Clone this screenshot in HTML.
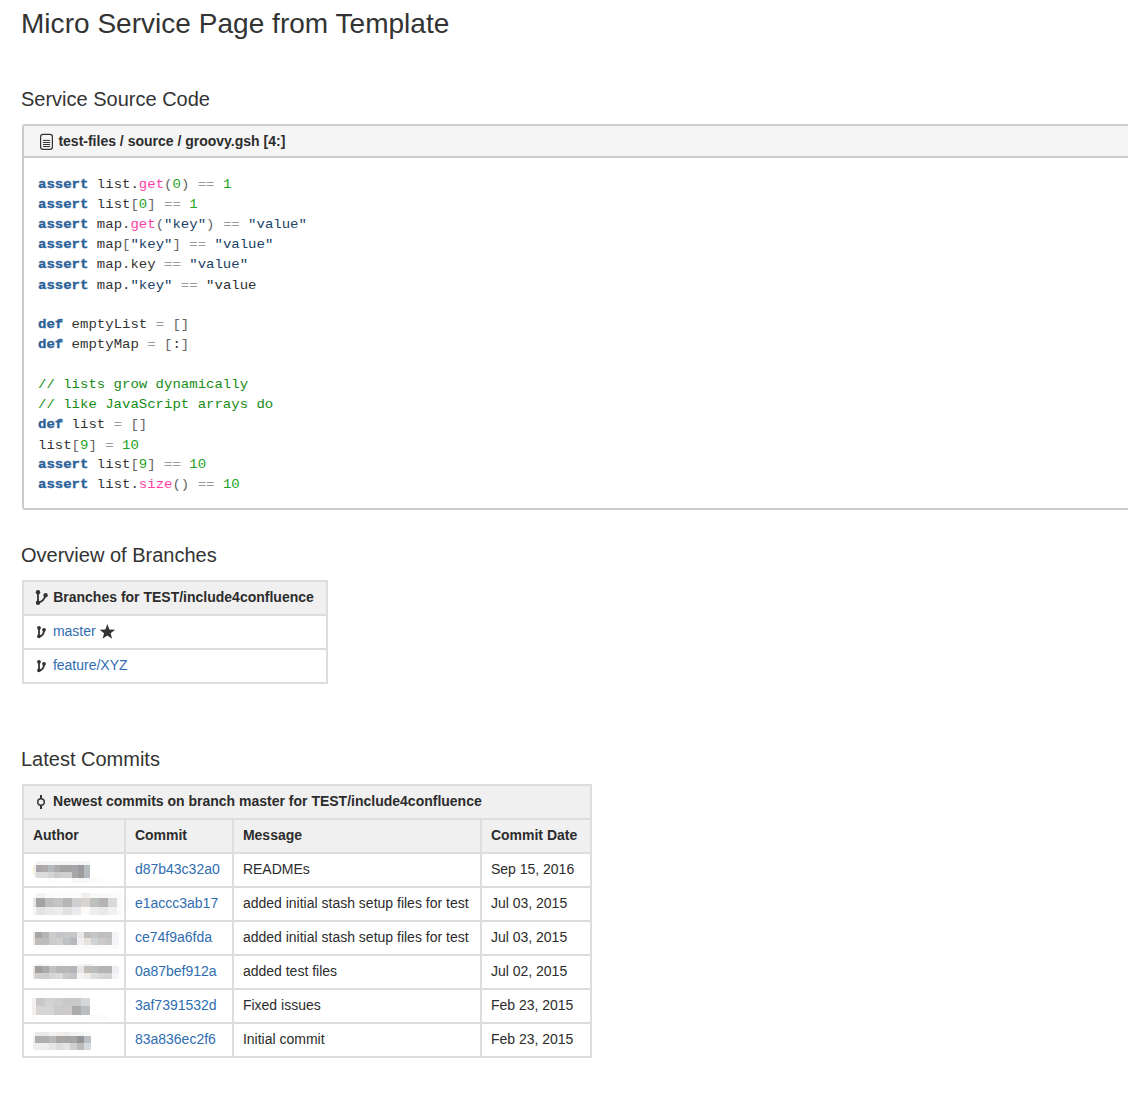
<!DOCTYPE html>
<html>
<head>
<meta charset="utf-8">
<title>Micro Service Page from Template</title>
<style>
*{box-sizing:border-box;margin:0;padding:0}
html,body{width:1128px;height:1106px;overflow:hidden;background:#fff}
body{font-family:"Liberation Sans",sans-serif;font-size:14px;color:#2c2c2c;position:relative}
.a{position:absolute;white-space:nowrap;line-height:18px;height:18px}
.b{font-weight:bold}
h1{position:absolute;left:21px;top:7px;letter-spacing:.03px;font-size:28px;font-weight:normal;line-height:34px;color:#333;white-space:nowrap}
h2{position:absolute;left:21px;font-size:20px;font-weight:normal;line-height:24px;color:#333;white-space:nowrap}
#h2a{top:87px}
#h2b{top:543px}
#h2c{top:747px}
#panel{position:absolute;left:22px;top:124px;width:1120px;height:386px;border:2px solid #ccc;border-radius:3px;background:#fff}
#phead{position:absolute;left:0;top:0;right:0;height:32px;background:#f5f5f5;border-bottom:2px solid #ccc}
pre{position:absolute;left:38px;top:174.7px;font-family:"Liberation Mono",monospace;font-size:14px;line-height:22.727px;color:#333;transform-origin:0 0;transform:scaleY(.88)}
pre .k{color:#2b6199;font-weight:bold;-webkit-text-stroke:.35px #2b6199}
pre .o{color:#9a9a9a}
pre .f{color:#ff3fa6}
pre .p{color:#666}
pre .n{color:#22a322}
pre .c{color:#168c16}
pre .s{color:#1a4166}
.ln{position:absolute;background:#ddd}
.hb{position:absolute;background:#f0f0f0}
.lk{color:#2f6db0}
svg{position:absolute;left:0;top:0;overflow:visible}
#pix i{position:absolute;display:block}
</style>
</head>
<body>
<h1>Micro Service Page from Template</h1>
<h2 id="h2a">Service Source Code</h2>
<div id="panel"><div id="phead"></div></div>
<div class="a b" style="left:58.4px;top:132px">test-files / source / groovy.gsh [4:]</div>
<pre><span class="k">assert</span> list.<span class="f">get</span><span class="p">(</span><span class="n">0</span><span class="p">)</span> <span class="o">==</span> <span class="n">1</span>
<span class="k">assert</span> list<span class="p">[</span><span class="n">0</span><span class="p">]</span> <span class="o">==</span> <span class="n">1</span>
<span class="k">assert</span> map.<span class="f">get</span><span class="p">(</span><span class="s">"key"</span><span class="p">)</span> <span class="o">==</span> <span class="s">"value"</span>
<span class="k">assert</span> map<span class="p">[</span><span class="s">"key"</span><span class="p">]</span> <span class="o">==</span> <span class="s">"value"</span>
<span class="k">assert</span> map.key <span class="o">==</span> <span class="s">"value"</span>
<span class="k">assert</span> map.<span class="s">"key"</span> <span class="o">==</span> "value

<span class="k">def</span> emptyList <span class="o">=</span> <span class="p">[]</span>
<span class="k">def</span> emptyMap <span class="o">=</span> <span class="p">[</span>:<span class="p">]</span>

<span class="c">// lists grow dynamically</span>
<span class="c">// like JavaScript arrays do</span>
<span class="k">def</span> list <span class="o">=</span> <span class="p">[]</span>
list<span class="p">[</span><span class="n">9</span><span class="p">]</span> <span class="o">=</span> <span class="n">10</span>
<span class="k">assert</span> list<span class="p">[</span><span class="n">9</span><span class="p">]</span> <span class="o">==</span> <span class="n">10</span>
<span class="k">assert</span> list.<span class="f">size</span><span class="p">()</span> <span class="o">==</span> <span class="n">10</span></pre>
<h2 id="h2b">Overview of Branches</h2>
<h2 id="h2c">Latest Commits</h2>

<div class="hb" style="left:22px;top:580px;width:306px;height:36px"></div>
<div class="ln" style="left:22px;top:580px;width:306px;height:2px"></div>
<div class="ln" style="left:22px;top:614px;width:306px;height:2px"></div>
<div class="ln" style="left:22px;top:648px;width:306px;height:2px"></div>
<div class="ln" style="left:22px;top:682px;width:306px;height:2px"></div>
<div class="ln" style="left:22px;top:580px;width:2px;height:104px"></div>
<div class="ln" style="left:326px;top:580px;width:2px;height:104px"></div>
<div class="a b" style="left:53.2px;top:588px">Branches for TEST/include4confluence</div>
<div class="a lk" style="left:52.9px;top:622px">master</div>
<div class="a lk" style="left:52.9px;top:656px">feature/XYZ</div>
<div class="hb" style="left:22px;top:784px;width:570px;height:70px"></div>
<div class="ln" style="left:22px;top:784px;width:570px;height:2px"></div>
<div class="ln" style="left:22px;top:818px;width:570px;height:2px"></div>
<div class="ln" style="left:22px;top:852px;width:570px;height:2px"></div>
<div class="ln" style="left:22px;top:886px;width:570px;height:2px"></div>
<div class="ln" style="left:22px;top:920px;width:570px;height:2px"></div>
<div class="ln" style="left:22px;top:954px;width:570px;height:2px"></div>
<div class="ln" style="left:22px;top:988px;width:570px;height:2px"></div>
<div class="ln" style="left:22px;top:1022px;width:570px;height:2px"></div>
<div class="ln" style="left:22px;top:1056px;width:570px;height:2px"></div>
<div class="ln" style="left:22px;top:784px;width:2px;height:274px"></div>
<div class="ln" style="left:590px;top:784px;width:2px;height:274px"></div>
<div class="ln" style="left:124px;top:818px;width:2px;height:240px"></div>
<div class="ln" style="left:232px;top:818px;width:2px;height:240px"></div>
<div class="ln" style="left:480px;top:818px;width:2px;height:240px"></div>
<div class="a b" style="left:53.1px;top:792px">Newest commits on branch master for TEST/include4confluence</div>
<div class="a b" style="left:32.9px;top:826px">Author</div>
<div class="a b" style="left:134.9px;top:826px">Commit</div>
<div class="a b" style="left:242.9px;top:826px">Message</div>
<div class="a b" style="left:490.9px;top:826px">Commit Date</div>
<div class="a lk" style="left:134.9px;top:860px">d87b43c32a0</div>
<div class="a " style="left:242.9px;top:860px">READMEs</div>
<div class="a " style="left:490.9px;top:860px">Sep 15, 2016</div>
<div class="a lk" style="left:134.9px;top:894px">e1accc3ab17</div>
<div class="a " style="left:242.9px;top:894px">added initial stash setup files for test</div>
<div class="a " style="left:490.9px;top:894px">Jul 03, 2015</div>
<div class="a lk" style="left:134.9px;top:928px">ce74f9a6fda</div>
<div class="a " style="left:242.9px;top:928px">added initial stash setup files for test</div>
<div class="a " style="left:490.9px;top:928px">Jul 03, 2015</div>
<div class="a lk" style="left:134.9px;top:962px">0a87bef912a</div>
<div class="a " style="left:242.9px;top:962px">added test files</div>
<div class="a " style="left:490.9px;top:962px">Jul 02, 2015</div>
<div class="a lk" style="left:134.9px;top:996px">3af7391532d</div>
<div class="a " style="left:242.9px;top:996px">Fixed issues</div>
<div class="a " style="left:490.9px;top:996px">Feb 23, 2015</div>
<div class="a lk" style="left:134.9px;top:1030px">83a836ec2f6</div>
<div class="a " style="left:242.9px;top:1030px">Initial commit</div>
<div class="a " style="left:490.9px;top:1030px">Feb 23, 2015</div>
<svg width="1128" height="1106" viewBox="0 0 1128 1106">
<rect x="40.6" y="134.4" width="11.8" height="15" rx="2.4" fill="none" stroke="#333" stroke-width="1.2"/>
<path d="M43 140.4h7.1M43 142.5h7.1M43 144.5h7.1M43 146.5h7.1" stroke="#333" stroke-width="1" fill="none"/>
<g fill="#333" stroke="none"><circle cx="38" cy="592.3" r="2.2"/><circle cx="38" cy="602.7" r="2.2"/><circle cx="45.6" cy="595.2" r="2.2"/></g>
<path d="M38 592.3V602.7M45.6 595.2C44.5 599.5 41.5 601.8 38 602.7" stroke="#333" stroke-width="1.8" fill="none"/>
<g fill="#333" stroke="none"><circle cx="39" cy="627.8" r="1.9"/><circle cx="39" cy="636.3" r="1.9"/><circle cx="44" cy="629.8" r="1.9"/></g>
<path d="M39 627.8V636.3M44 629.8C44 634.6 42.6 636.3 39 636.3" stroke="#333" stroke-width="1.8" fill="none"/>
<g fill="#333" stroke="none"><circle cx="39" cy="661.8" r="1.9"/><circle cx="39" cy="670.3" r="1.9"/><circle cx="44" cy="663.8" r="1.9"/></g>
<path d="M39 661.8V670.3M44 663.8C44 668.6 42.6 670.3 39 670.3" stroke="#333" stroke-width="1.8" fill="none"/>
<polygon points="107.35,624.00 109.35,629.45 115.15,629.67 110.58,633.25 112.17,638.83 107.35,635.60 102.53,638.83 104.12,633.25 99.55,629.67 105.35,629.45" fill="#333"/>
<circle cx="41" cy="801.9" r="3.25" fill="none" stroke="#333" stroke-width="1.5"/>
<path d="M41 795V798.6M41 805.2V808.9" stroke="#333" stroke-width="2" fill="none"/>
</svg>
<div id="pix"><i style="left:36px;top:861px;width:6px;height:4px;background:#f5f5f5"></i><i style="left:42px;top:861px;width:6px;height:4px;background:#f5f5f5"></i><i style="left:48px;top:861px;width:6px;height:4px;background:#f5f5f5"></i><i style="left:54px;top:861px;width:6px;height:4px;background:#f5f5f5"></i><i style="left:60px;top:861px;width:6px;height:4px;background:#f5f5f5"></i><i style="left:66px;top:861px;width:6px;height:4px;background:#f5f5f5"></i><i style="left:72px;top:861px;width:6px;height:4px;background:#f5f5f5"></i><i style="left:78px;top:861px;width:6px;height:4px;background:#f5f5f5"></i><i style="left:84px;top:861px;width:6px;height:4px;background:#f5f5f5"></i><i style="left:36px;top:865px;width:6px;height:6.5px;background:#a8a6a8"></i><i style="left:42px;top:865px;width:6px;height:6.5px;background:#aeaaaa"></i><i style="left:48px;top:865px;width:6px;height:6.5px;background:#b4b9bd"></i><i style="left:54px;top:865px;width:6px;height:6.5px;background:#adabab"></i><i style="left:60px;top:865px;width:6px;height:6.5px;background:#a3a3a3"></i><i style="left:66px;top:865px;width:6px;height:6.5px;background:#a3a3a3"></i><i style="left:72px;top:865px;width:6px;height:6.5px;background:#a5a4a8"></i><i style="left:78px;top:865px;width:6px;height:6.5px;background:#9b9b9f"></i><i style="left:84px;top:865px;width:6px;height:6.5px;background:#b5bcc0"></i><i style="left:36px;top:871.5px;width:6px;height:6px;background:#dcdcdc"></i><i style="left:42px;top:871.5px;width:6px;height:6px;background:#dcdcdb"></i><i style="left:48px;top:871.5px;width:6px;height:6px;background:#d5d3d5"></i><i style="left:54px;top:871.5px;width:6px;height:6px;background:#cbc9cb"></i><i style="left:60px;top:871.5px;width:6px;height:6px;background:#cfcfcf"></i><i style="left:66px;top:871.5px;width:6px;height:6px;background:#cfcfcf"></i><i style="left:72px;top:871.5px;width:6px;height:6px;background:#a9a6a9"></i><i style="left:78px;top:871.5px;width:6px;height:6px;background:#9c9c9f"></i><i style="left:84px;top:871.5px;width:6px;height:6px;background:#b5bbc0"></i><i style="left:48px;top:877.5px;width:6px;height:5px;background:#fcfcfc"></i><i style="left:54px;top:877.5px;width:6px;height:5px;background:#fcfcfc"></i><i style="left:72px;top:877.5px;width:6px;height:5px;background:#f8f7f6"></i><i style="left:78px;top:877.5px;width:6px;height:5px;background:#f6f6f6"></i><i style="left:84px;top:877.5px;width:6px;height:5px;background:#f8f8f8"></i><i style="left:90px;top:877.5px;width:6px;height:5px;background:#fafafa"></i><i style="left:96px;top:877.5px;width:6px;height:5px;background:#fcfcfc"></i><i style="left:102px;top:877.5px;width:6px;height:5px;background:#fdfdfd"></i><i style="left:33px;top:866px;width:1px;height:8px;background:#f6efc0"></i><i style="left:34px;top:865px;width:2px;height:12px;background:#eeeeee"></i><i style="left:36px;top:893px;width:9px;height:4.5px;background:#f3f3f3"></i><i style="left:45px;top:893px;width:9px;height:4.5px;background:#fbfbfb"></i><i style="left:54px;top:893px;width:9px;height:4.5px;background:#fbfbfb"></i><i style="left:63px;top:893px;width:9px;height:4.5px;background:#fcfcfc"></i><i style="left:72px;top:893px;width:9px;height:4.5px;background:#fcfcfc"></i><i style="left:81px;top:893px;width:9px;height:4.5px;background:#f0f0f0"></i><i style="left:90px;top:893px;width:9px;height:4.5px;background:#f7f8f7"></i><i style="left:99px;top:893px;width:9px;height:4.5px;background:#f9f9f9"></i><i style="left:108px;top:893px;width:9px;height:4.5px;background:#fbfbfb"></i><i style="left:117px;top:893px;width:5px;height:22px;background:#fafafa"></i><i style="left:36px;top:897.5px;width:9px;height:9px;background:#a4a2a3"></i><i style="left:45px;top:897.5px;width:9px;height:9px;background:#bdbdbd"></i><i style="left:54px;top:897.5px;width:9px;height:9px;background:#c4c4c4"></i><i style="left:63px;top:897.5px;width:9px;height:9px;background:#b6b6b6"></i><i style="left:72px;top:897.5px;width:9px;height:9px;background:#cfcfd2"></i><i style="left:81px;top:897.5px;width:9px;height:9px;background:#d8d4d1"></i><i style="left:90px;top:897.5px;width:9px;height:9px;background:#bcc1bd"></i><i style="left:99px;top:897.5px;width:9px;height:9px;background:#b5b3b3"></i><i style="left:108px;top:897.5px;width:9px;height:9px;background:#d9d9dc"></i><i style="left:36px;top:906.5px;width:9px;height:8.5px;background:#e5e3e4"></i><i style="left:45px;top:906.5px;width:9px;height:8.5px;background:#e8e8e8"></i><i style="left:54px;top:906.5px;width:9px;height:8.5px;background:#ececec"></i><i style="left:63px;top:906.5px;width:9px;height:8.5px;background:#e1e1e1"></i><i style="left:72px;top:906.5px;width:9px;height:8.5px;background:#e9ebee"></i><i style="left:81px;top:906.5px;width:9px;height:8.5px;background:#fbfaf8"></i><i style="left:90px;top:906.5px;width:9px;height:8.5px;background:#eceeed"></i><i style="left:99px;top:906.5px;width:9px;height:8.5px;background:#e9e9e9"></i><i style="left:108px;top:906.5px;width:9px;height:8.5px;background:#f1f1f1"></i><i style="left:33px;top:897.5px;width:3px;height:9px;background:#e8e6e3"></i><i style="left:33px;top:906.5px;width:3px;height:8.5px;background:#f6f6f6"></i><i style="left:35px;top:932px;width:7px;height:6px;background:#a8a6a5"></i><i style="left:42px;top:932px;width:7px;height:6px;background:#b5b5b9"></i><i style="left:49px;top:932px;width:7px;height:6px;background:#cdcccb"></i><i style="left:56px;top:932px;width:7px;height:6px;background:#c3c4c7"></i><i style="left:63px;top:932px;width:7px;height:6px;background:#c6c8c9"></i><i style="left:70px;top:932px;width:7px;height:6px;background:#c5c6c9"></i><i style="left:77px;top:932px;width:7px;height:6px;background:#e9e7e8"></i><i style="left:84px;top:932px;width:7px;height:6px;background:#c1beb9"></i><i style="left:91px;top:932px;width:7px;height:6px;background:#c3c7c8"></i><i style="left:98px;top:932px;width:7px;height:6px;background:#c1bfbe"></i><i style="left:105px;top:932px;width:7px;height:6px;background:#c0bfc2"></i><i style="left:112px;top:932px;width:7px;height:6px;background:#f5f5f7"></i><i style="left:35px;top:938px;width:7px;height:6.7px;background:#bebdbc"></i><i style="left:42px;top:938px;width:7px;height:6.7px;background:#bcbcbf"></i><i style="left:49px;top:938px;width:7px;height:6.7px;background:#cacaca"></i><i style="left:56px;top:938px;width:7px;height:6.7px;background:#cfcfcf"></i><i style="left:63px;top:938px;width:7px;height:6.7px;background:#bfc0c1"></i><i style="left:70px;top:938px;width:7px;height:6.7px;background:#b6b8bb"></i><i style="left:77px;top:938px;width:7px;height:6.7px;background:#f0f0f0"></i><i style="left:84px;top:938px;width:7px;height:6.7px;background:#e6e3de"></i><i style="left:91px;top:938px;width:7px;height:6.7px;background:#d1d4d4"></i><i style="left:98px;top:938px;width:7px;height:6.7px;background:#cccbc9"></i><i style="left:105px;top:938px;width:7px;height:6.7px;background:#c6c6c6"></i><i style="left:112px;top:938px;width:7px;height:6.7px;background:#f5f5f7"></i><i style="left:35px;top:944.7px;width:7px;height:4px;background:#fbfbfb"></i><i style="left:42px;top:944.7px;width:7px;height:4px;background:#fbfbfb"></i><i style="left:49px;top:944.7px;width:7px;height:4px;background:#fbfbfb"></i><i style="left:56px;top:944.7px;width:7px;height:4px;background:#fbfbfb"></i><i style="left:63px;top:944.7px;width:7px;height:4px;background:#fbfbfb"></i><i style="left:70px;top:944.7px;width:7px;height:4px;background:#fbfbfb"></i><i style="left:77px;top:944.7px;width:7px;height:4px;background:#fbfbfb"></i><i style="left:84px;top:944.7px;width:7px;height:4px;background:#fbfbfb"></i><i style="left:91px;top:944.7px;width:7px;height:4px;background:#fbfbfb"></i><i style="left:98px;top:944.7px;width:7px;height:4px;background:#fbfbfb"></i><i style="left:105px;top:944.7px;width:7px;height:4px;background:#fbfbfb"></i><i style="left:112px;top:944.7px;width:7px;height:4px;background:#fbfbfb"></i><i style="left:33px;top:932px;width:2px;height:12.7px;background:#ebeae8"></i><i style="left:35px;top:966px;width:7px;height:7px;background:#9f9e9b"></i><i style="left:42px;top:966px;width:7px;height:7px;background:#a9a9ae"></i><i style="left:49px;top:966px;width:7px;height:7px;background:#c2c1bf"></i><i style="left:56px;top:966px;width:7px;height:7px;background:#b6b8b8"></i><i style="left:63px;top:966px;width:7px;height:7px;background:#b6b8b8"></i><i style="left:70px;top:966px;width:7px;height:7px;background:#b4b5b8"></i><i style="left:77px;top:966px;width:7px;height:7px;background:#e5e3e4"></i><i style="left:84px;top:966px;width:7px;height:7px;background:#c0bdb8"></i><i style="left:91px;top:966px;width:7px;height:7px;background:#b8bdbc"></i><i style="left:98px;top:966px;width:7px;height:7px;background:#b5b3b1"></i><i style="left:105px;top:966px;width:7px;height:7px;background:#b3b1b4"></i><i style="left:112px;top:966px;width:7px;height:7px;background:#eff0f5"></i><i style="left:35px;top:973px;width:7px;height:5.8px;background:#d0cfce"></i><i style="left:42px;top:973px;width:7px;height:5.8px;background:#cecccd"></i><i style="left:49px;top:973px;width:7px;height:5.8px;background:#d6d6d6"></i><i style="left:56px;top:973px;width:7px;height:5.8px;background:#dadada"></i><i style="left:63px;top:973px;width:7px;height:5.8px;background:#c9c9ca"></i><i style="left:70px;top:973px;width:7px;height:5.8px;background:#c3c4c9"></i><i style="left:77px;top:973px;width:7px;height:5.8px;background:#f3f4f4"></i><i style="left:84px;top:973px;width:7px;height:5.8px;background:#ecebe7"></i><i style="left:91px;top:973px;width:7px;height:5.8px;background:#dcdedd"></i><i style="left:98px;top:973px;width:7px;height:5.8px;background:#d9d8d6"></i><i style="left:105px;top:973px;width:7px;height:5.8px;background:#d3d3d3"></i><i style="left:112px;top:973px;width:7px;height:5.8px;background:#f6f6f8"></i><i style="left:35px;top:964px;width:7px;height:2px;background:#f4f4f4"></i><i style="left:42px;top:964px;width:7px;height:2px;background:#f8f8f8"></i><i style="left:49px;top:964px;width:7px;height:2px;background:#fcfcfc"></i><i style="left:56px;top:964px;width:7px;height:2px;background:#fafafa"></i><i style="left:63px;top:964px;width:7px;height:2px;background:#fcfcfc"></i><i style="left:70px;top:964px;width:7px;height:2px;background:#fcfcfc"></i><i style="left:77px;top:964px;width:7px;height:2px;background:#f4f4f4"></i><i style="left:84px;top:964px;width:7px;height:2px;background:#eeeeee"></i><i style="left:91px;top:964px;width:7px;height:2px;background:#fafafa"></i><i style="left:98px;top:964px;width:7px;height:2px;background:#fcfcfc"></i><i style="left:105px;top:964px;width:7px;height:2px;background:#fcfcfc"></i><i style="left:112px;top:964px;width:7px;height:2px;background:#fcfcfc"></i><i style="left:33px;top:966px;width:2px;height:12.8px;background:#e6e4e0"></i><i style="left:36px;top:998px;width:9px;height:8px;background:#c9c7c8"></i><i style="left:45px;top:998px;width:9px;height:8px;background:#d1d3d5"></i><i style="left:54px;top:998px;width:9px;height:8px;background:#d0cfcd"></i><i style="left:63px;top:998px;width:9px;height:8px;background:#c8c8c8"></i><i style="left:72px;top:998px;width:9px;height:8px;background:#c9c9c9"></i><i style="left:81px;top:998px;width:9px;height:8px;background:#d5d7d9"></i><i style="left:36px;top:1006px;width:9px;height:9px;background:#d6d5d3"></i><i style="left:45px;top:1006px;width:9px;height:9px;background:#d5d5d5"></i><i style="left:54px;top:1006px;width:9px;height:9px;background:#cacaca"></i><i style="left:63px;top:1006px;width:9px;height:9px;background:#cccaca"></i><i style="left:72px;top:1006px;width:9px;height:9px;background:#ababab"></i><i style="left:81px;top:1006px;width:9px;height:9px;background:#b9bec2"></i><i style="left:72px;top:1015px;width:9px;height:4.5px;background:#fcfcfc"></i><i style="left:81px;top:1015px;width:9px;height:4.5px;background:#fcfcfc"></i><i style="left:90px;top:1015px;width:9px;height:4.5px;background:#fafafa"></i><i style="left:99px;top:1015px;width:9px;height:4.5px;background:#fbfbfb"></i><i style="left:32px;top:998px;width:4px;height:17px;background:#f1f0ee"></i><i style="left:32px;top:1015px;width:4px;height:4.5px;background:#f9f9f9"></i><i style="left:35px;top:1032px;width:7px;height:3.8px;background:#eaeaea"></i><i style="left:42px;top:1032px;width:7px;height:3.8px;background:#e9eaea"></i><i style="left:49px;top:1032px;width:7px;height:3.8px;background:#f1f2f3"></i><i style="left:56px;top:1032px;width:7px;height:3.8px;background:#f1f0ee"></i><i style="left:63px;top:1032px;width:7px;height:3.8px;background:#ececec"></i><i style="left:70px;top:1032px;width:7px;height:3.8px;background:#f2f2f2"></i><i style="left:77px;top:1032px;width:7px;height:3.8px;background:#f4f4f4"></i><i style="left:84px;top:1032px;width:7px;height:3.8px;background:#f8f9f9"></i><i style="left:35px;top:1035.8px;width:7px;height:7px;background:#b0afaf"></i><i style="left:42px;top:1035.8px;width:7px;height:7px;background:#b1afb0"></i><i style="left:49px;top:1035.8px;width:7px;height:7px;background:#b8b8b8"></i><i style="left:56px;top:1035.8px;width:7px;height:7px;background:#a8a7a5"></i><i style="left:63px;top:1035.8px;width:7px;height:7px;background:#a6a6a6"></i><i style="left:70px;top:1035.8px;width:7px;height:7px;background:#a6a6a6"></i><i style="left:77px;top:1035.8px;width:7px;height:7px;background:#949599"></i><i style="left:84px;top:1035.8px;width:7px;height:7px;background:#b9bfc4"></i><i style="left:35px;top:1042.8px;width:7px;height:7px;background:#eeeeee"></i><i style="left:42px;top:1042.8px;width:7px;height:7px;background:#eeedeb"></i><i style="left:49px;top:1042.8px;width:7px;height:7px;background:#e6e5e5"></i><i style="left:56px;top:1042.8px;width:7px;height:7px;background:#dddddd"></i><i style="left:63px;top:1042.8px;width:7px;height:7px;background:#e3e3e3"></i><i style="left:70px;top:1042.8px;width:7px;height:7px;background:#d0cecf"></i><i style="left:77px;top:1042.8px;width:7px;height:7px;background:#bbbbbb"></i><i style="left:84px;top:1042.8px;width:7px;height:7px;background:#d5dade"></i><i style="left:33px;top:1035.8px;width:2px;height:14px;background:#f0efed"></i></div>
</body>
</html>
